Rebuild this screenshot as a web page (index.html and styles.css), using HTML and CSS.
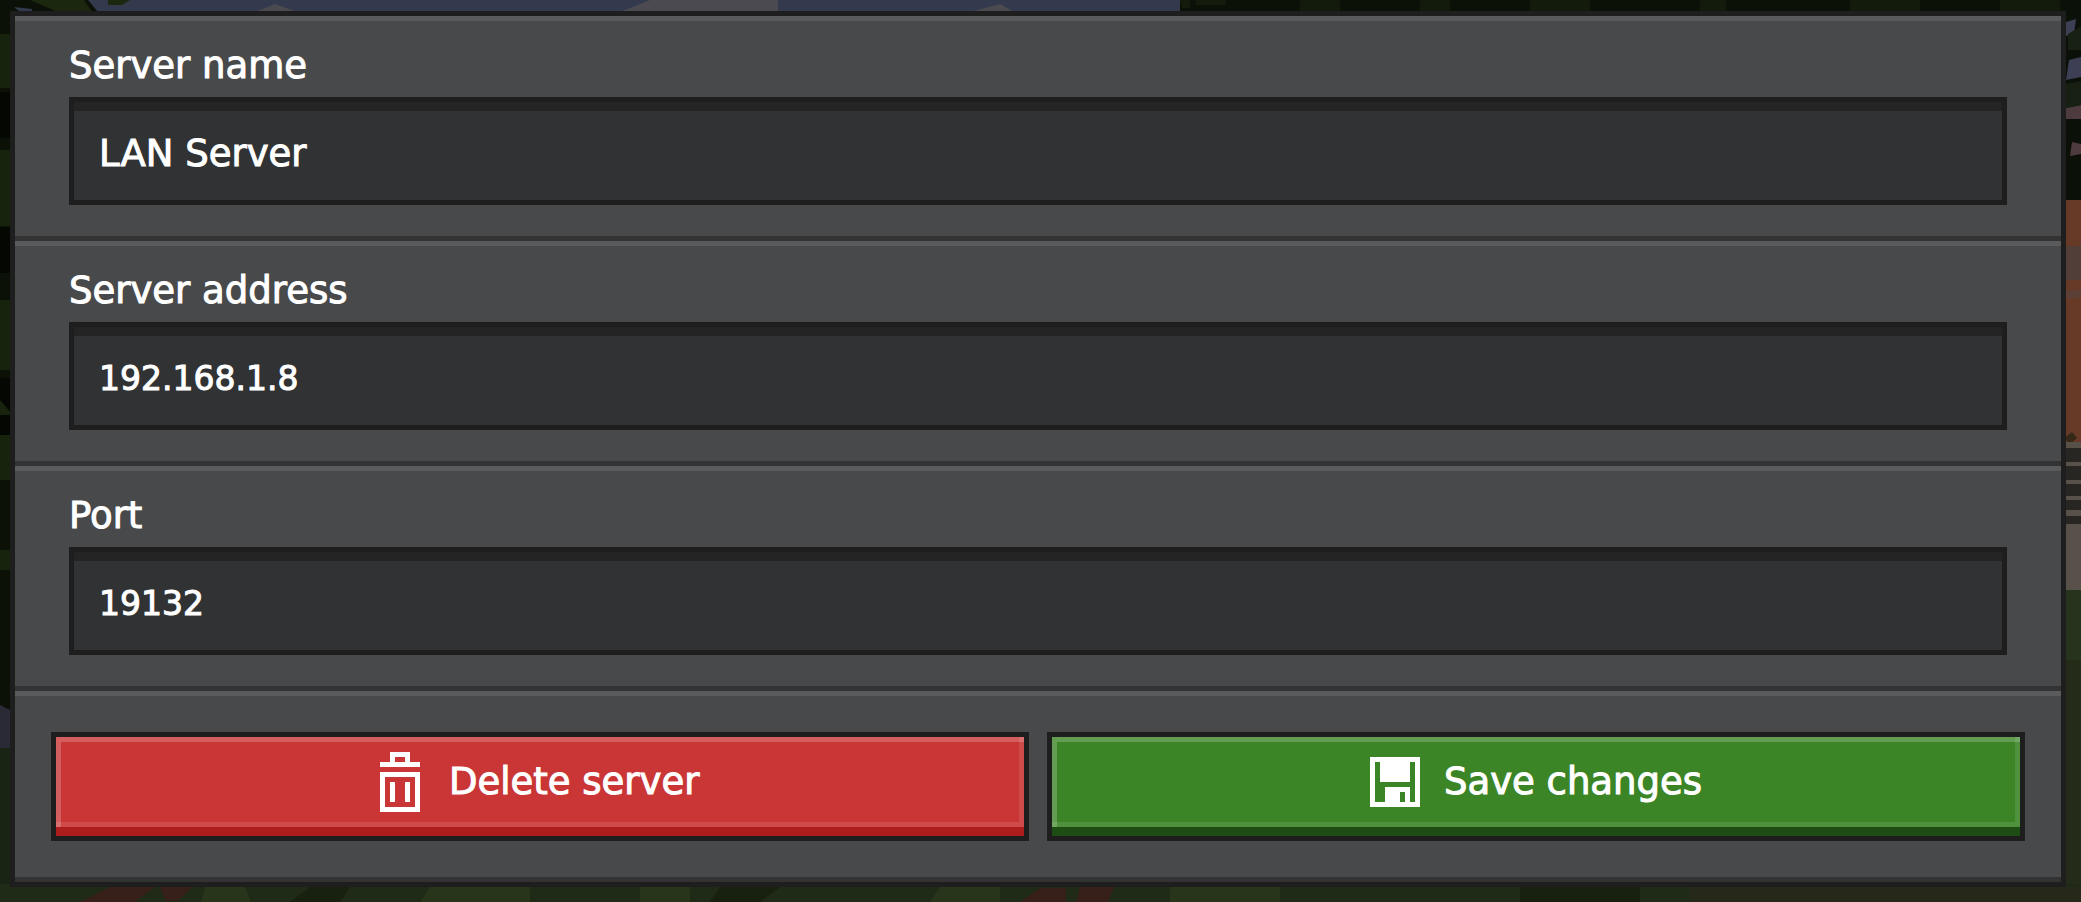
FILE: index.html
```
<!DOCTYPE html>
<html lang="en">
<head>
  <meta charset="UTF-8" />
  <meta name="viewport" content="width=device-width, initial-scale=1.0" />
  <title>Edit server</title>
  <link rel="stylesheet" href="styles.css">
</head>
<body>
  <!-- darkened world behind the panel -->
  <svg class="scene" viewBox="0 0 2081 902" preserveAspectRatio="none" aria-hidden="true">
    <rect width="2081" height="902" fill="#0c1107" />
    <rect x="120" width="1060" height="30" fill="#343a4e" />
    <path d="M255 12l20-8 22 8zM620 12l30-12h128v12zM970 12l30-8 14 8z" fill="#4a4a50" />
    <path d="M14 7l18 2v3H20zM88 0h32v12H98z" fill="#343a4e" />
    <path d="M30 0h54l8 12H58zM108 0h22l-8 5h-14z" fill="#1b280f" />
    <path d="M1180 0h10v8h-8zM1196 0h30v5h-30zM1300 0h40v12h-40zM1420 0h30v12h-30zM1530 0h60v12h-60zM1700 0h26v12h-26zM1850 0h70v12h-70zM2000 0h60v12h-60z" fill="#131c0c" />
    <path d="M0 34h12v54H0zM0 150h12v76H0zM0 300h12v70H0zM0 380l12 30v30H0zM0 440h12v40H0zM0 550h12v20H0z" fill="#18230d" />
    <path d="M0 92h12v46H0zM0 227h12v46H0zM0 378h12v36l-12-14zM0 415h12v20H0z" fill="#050703" />
    <path d="M0 705l10 5v38H0z" fill="#292a35" />
    <path d="M0 748h12v154H0z" fill="#1a2414" />
    <rect x="2064" width="17" height="200" fill="#0b1009" />
    <path d="M2066 22l10-3-2 15-8 2zM2069 60l12-3v20l-15 3z" fill="#3d3f55" />
    <path d="M2066 108l15-3v14h-15zM2072 142l9 2v10l-11 2z" fill="#4e3b40" />
    <path d="M2068 34l13-8v24h-13zM2066 84l15-3v24l-15 3z" fill="#172012" />
    <rect x="2064" y="200" width="17" height="246" fill="#663a27" />
    <rect x="2064" y="246" width="17" height="34" fill="#513e38" />
    <rect x="2064" y="290" width="17" height="8" fill="#5c4035" />
    <path d="M2064 438l8-6 5 6-7 6z" fill="#352817" />
    <rect x="2064" y="442" width="17" height="150" fill="#57514a" />
    <path d="M2064 448h17v14h-17zM2064 466h17v14h-17zM2064 484h17v12h-17zM2064 500h17v10h-17zM2064 516h17v8h-17z" fill="#282622" />
    <rect x="2064" y="590" width="17" height="80" fill="#26341d" />
    <rect x="2064" y="660" width="17" height="242" fill="#242b18" />
    <rect y="884" width="2081" height="18" fill="#1f2a17" />
    <path d="M80 902l30-15h45l-20 15zM160 887h32l-14 14h-12zM1020 902l20-14h26v14zM1080 887h34l-6 15h-32z" fill="#38201a" />
    <path d="M205 887h40l6 15h-50zM430 887h100v15h-110zM640 887h50v15h-50zM940 887h60v15h-70zM1170 887h110v15h-110z" fill="#28351b" />
    <path d="M310 887h40l-10 15h-50zM720 887h60l-20 15h-50zM1520 887h120v15h-120z" fill="#18210f" />
    <rect x="1690" y="887" width="391" height="15" fill="#26291a" />
  </svg>

  <form class="panel">
    <div class="field">
      <label for="serverName">Server name</label>
      <input type="text" id="serverName" value="LAN Server" />
    </div>
    <div class="field">
      <label for="serverAddress">Server address</label>
      <input type="text" class="number" id="serverAddress" value="192.168.1.8" />
    </div>
    <div class="field">
      <label for="port">Port</label>
      <input type="text" class="number" id="port" value="19132" />
    </div>
    <div class="actions">
      <button type="button" class="delete">
        <span class="face">
          <svg width="50" height="60" viewBox="0 0 10 12" shape-rendering="crispEdges" aria-hidden="true">
            <path fill="#fff" fill-rule="evenodd" d="M3 0h4v2h2v1H1V2h2zM4 1v1h2V1zM1 4h8v8H1zM2 5v6h6V5zM3 6h1v4H3zM6 6h1v4H6z" />
          </svg>
          <span class="text">Delete server</span>
        </span>
      </button>
      <button type="button" class="save">
        <span class="face">
          <svg width="50" height="50" viewBox="0 0 10 10" shape-rendering="crispEdges" aria-hidden="true">
            <path fill="#fff" fill-rule="evenodd" d="M0 0h10v10H0zM1 1v8h2V6h5v3h1V1H8v4H2V1zM6 7v2h1V7z" />
          </svg>
          <span class="text">Save changes</span>
        </span>
      </button>
    </div>
  </form>
</body>
</html>
```

FILE: styles.css
```
* {
  margin: 0;
  padding: 0;
  box-sizing: border-box;
}
body {
  font-family: "DejaVu Sans", sans-serif;
  font-size: 37px;
  line-height: 42px;
  color: #fff;
  -webkit-text-stroke: 1px #fff;
  background-color: #0c1107;
  padding: 11px 15px 15px 10px;
}
.scene {
  position: fixed;
  top: 0;
  left: 0;
  width: 100%;
  height: 100%;
  z-index: -1;
}
.panel {
  border: 5px solid #1e1e1f;
  background-color: #48494a;
}
.field {
  padding: 24px 54px 31px;
  border-top: 5px solid #5a5b5c;
  border-bottom: 5px solid #333334;
}
label {
  display: block;
  margin-bottom: 10px;
}
input {
  display: block;
  width: 100%;
  height: 108px;
  padding: 5px 25px 0;
  border: 5px solid #1e1e1f;
  background-color: #313233;
  box-shadow: inset 0 9px 0 #242425;
  color: #fff;
  font: inherit;
  outline: none;
}
.number {
  font-size: 33px;
}
.actions {
  display: flex;
  gap: 18px;
  padding: 36px;
  border-top: 5px solid #5a5b5c;
  border-bottom: 5px solid #333334;
}
button {
  flex: 1;
  padding-bottom: 9px;
  border: 5px solid #1e1e1f;
  color: #fff;
  font: inherit;
  cursor: pointer;
}
/* light bevel, the two shadows overlap in the corners */
.face {
  display: flex;
  align-items: center;
  justify-content: center;
  gap: 24px;
  height: 90px;
  box-shadow: inset 5px 5px 0 rgba(255, 255, 255, 0.2), inset -5px -5px 0 rgba(255, 255, 255, 0.1);
}
.text {
  min-width: 256px;
  text-align: left;
}
.delete {
  background-color: #ad1d1d;
}
.delete .face {
  background-color: #ca3636;
}
.save {
  background-color: #1d4d13;
}
.save .face {
  background-color: #3c8527;
}
```
